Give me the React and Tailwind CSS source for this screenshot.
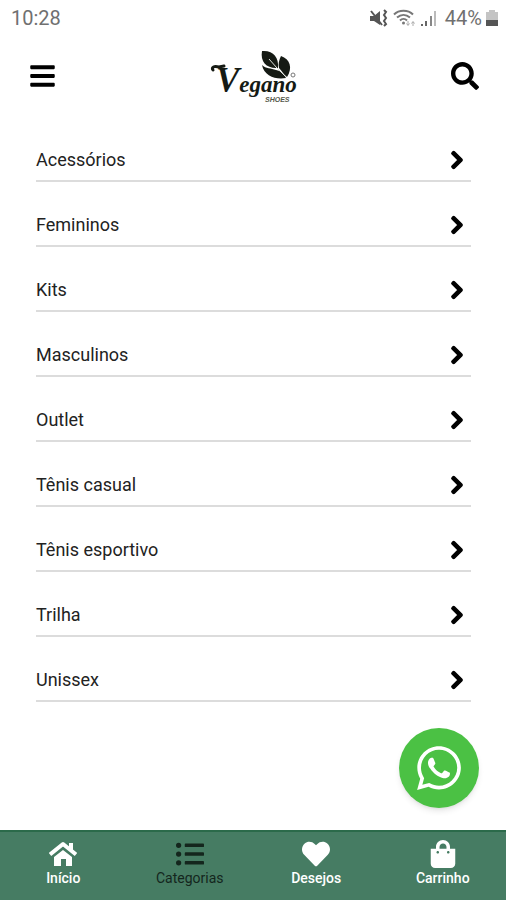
import { FaBars, FaSearch, FaChevronRight, FaListUl, FaHeart, FaShoppingBag, FaWhatsapp } from 'react-icons/fa';

const HomeIcon = ({ className }) => (
  <svg viewBox="0 0 28 28" className={className} fill="currentColor" aria-hidden="true">
    <path d="M1 14.500L14 4L27 14.500" fill="none" stroke="currentColor" strokeWidth="4" strokeLinejoin="round" />
    <path d="M20 3h4v9l-4-3z" />
    <path d="M5 17L14 10l9 7V26h-6v-7h-5v7H5z" />
  </svg>
);

const categories = [
  'Acessórios',
  'Femininos',
  'Kits',
  'Masculinos',
  'Outlet',
  'Tênis casual',
  'Tênis esportivo',
  'Trilha',
  'Unissex',
];

const tabs = [
  { label: 'Início', icon: HomeIcon },
  { label: 'Categorias', icon: FaListUl, active: true },
  { label: 'Desejos', icon: FaHeart },
  { label: 'Carrinho', icon: FaShoppingBag },
];

const StatusBar = () => (
  <div className="flex h-9 items-center justify-between pl-[11px] pr-2 text-xl text-[#707070]">
    <span>10:28</span>
    <div className="flex items-center gap-1">
      {/* muted / vibrate */}
      <svg width="20" height="18" viewBox="0 0 20 18" aria-hidden="true">
        <path d="M1 7h4l6-5v14l-6-4H1z" fill="#555" />
        <path d="M2 2l11 14" stroke="#555" strokeWidth="2" />
        <path d="M15 1l2 2-2 3 2 3-2 3 2 3-2 2" stroke="#555" strokeWidth="2" fill="none" />
      </svg>
      {/* wifi */}
      <svg width="24" height="18" viewBox="0 0 24 18" aria-hidden="true" fill="none" stroke="#777" strokeWidth="2">
        <path d="M1 5.500c5-5 14-5 19 0M4 8.500c4-3.500 9-3.500 13 0M7 11.500c2-2 5-2 7 0" />
        <circle cx="10.500" cy="14" r="1.500" fill="#777" stroke="none" />
        <path d="M15 12v4M13.500 14.500l1.500 2 1.500-2M20 17v-4M18.500 14.500l1.500-2 1.500 2" stroke="#aaa" strokeWidth="1" />
      </svg>
      {/* signal */}
      <svg width="16" height="18" viewBox="0 0 16 18" aria-hidden="true">
        <path d="M0 15h2v2H0zM4 12h2v5H4z" fill="#666" />
        <path d="M9 7h2v10H9z" fill="#888" />
        <path d="M13 2h2v15h-2z" fill="#bbb" />
      </svg>
      <span className="pl-1">44%</span>
      <svg width="12" height="18" viewBox="0 0 12 18" aria-hidden="true">
        <path d="M3 1h6v2h3v8H0V3h3z" fill="#c4c4c4" />
        <path d="M0 11h12v6H0z" fill="#555" />
      </svg>
    </div>
  </div>
);

const Logo = () => (
  <svg width="90" height="56" viewBox="0 0 90 56" role="img" aria-label="Vegano Shoes" fill="#151a14">
    {/* swash */}
    <path d="M5 22c-2-3 1-4 6-3l5-1" fill="none" stroke="#151a14" strokeWidth="3" strokeLinecap="round" />
    <text x="8" y="44" fontFamily="Liberation Serif, serif" fontStyle="italic" fontWeight="700">
      <tspan fontSize="35">V</tspan>
      <tspan fontSize="23">egano</tspan>
    </text>
    {/* leaves */}
    <path d="M54 3c11-1 17 6 16 17-11 1-18-6-16-17z" />
    <path d="M73 8c9 3 12 12 6 21-4-3-5-6-8-9-1-4 0-8 2-12z" />
    <path d="M54 17c4 4 9 3 14 5 5 1 8 4 10 8-10 2-22-2-24-13z" />
    <path d="M61 11l8 9 9 9" fill="none" stroke="#dfe2dc" strokeWidth="1" />
    <circle cx="85" cy="27" r="2" fill="none" stroke="#777" strokeWidth="1" />
    <text x="57" y="54" fontFamily="Liberation Sans, sans-serif" fontSize="7" fontStyle="italic" fontWeight="700" fill="#55584a">
      SHOES
    </text>
  </svg>
);

const App = () => {
  return (
    <div className="flex min-h-screen flex-col bg-white font-[Roboto,sans-serif] text-[#222]">
      <StatusBar />

      <header className="flex h-20 items-center justify-between pl-[30px] pr-[27px] text-black">
        <button type="button" aria-label="Menu">
          <FaBars className="h-7 w-[25px]" />
        </button>
        <Logo />
        <button type="button" aria-label="Buscar">
          <FaSearch className="size-7" />
        </button>
      </header>

      <main className="flex-1 pt-px pr-[35px] pb-32 pl-9">
        <ul>
          {categories.map((name) => (
            <li key={name}>
              <a href="#" className="flex h-[65px] items-end justify-between border-b-2 border-[#dcdcdc] pr-[7px] pb-2 text-lg/6">
                <span>{name}</span>
                <FaChevronRight className="h-6 w-[14px] stroke-black stroke-[36px] py-[2px] text-black" />
              </a>
            </li>
          ))}
        </ul>
      </main>

      <a
        href="#"
        aria-label="WhatsApp"
        className="fixed right-[27px] bottom-[92px] flex size-20 items-center justify-center rounded-full bg-[#4bc144] text-white shadow-md"
      >
        <FaWhatsapp className="size-[50px]" />
      </a>

      <nav className="sticky bottom-0 grid h-[70px] grid-cols-4 border-t-2 border-[#2b6a4a] bg-[#467c63] text-sm/5">
        {tabs.map(({ label, icon: Icon, active }) => (
          <a
            key={label}
            href="#"
            aria-current={active ? 'page' : undefined}
            className={`flex flex-col items-center pt-2 ${active ? 'text-[#14261d]' : 'font-medium text-white'}`}
          >
            <Icon className="size-7" />
            <span>{label}</span>
          </a>
        ))}
      </nav>
    </div>
  );
};

export default App;
